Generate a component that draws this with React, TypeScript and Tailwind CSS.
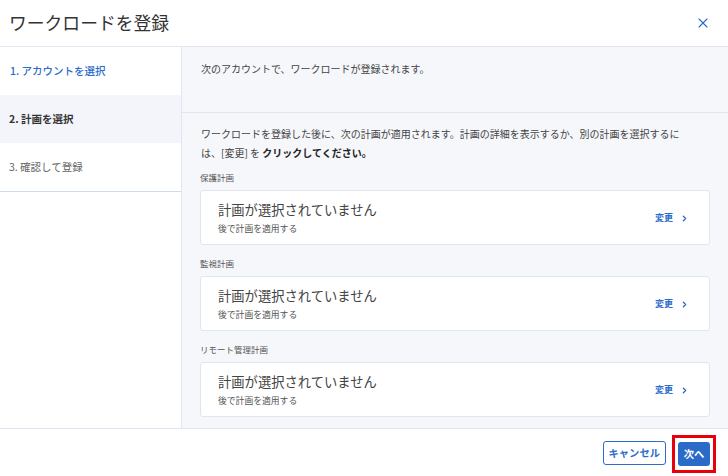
import { X, ChevronRight } from "lucide-react";

const plans = ["保護計画", "監視計画", "リモート管理計画"];

const PlanCard = ({ label, first }: { label: string; first?: boolean }) => (
  <div className={first ? "" : "mt-3"}>
    <div className="text-[8.5px] leading-[12px] text-[#555] mb-[7px]">{label}</div>
    <div className="h-[55px] bg-white border border-[#dfe6f1] rounded-[3px] flex items-center justify-between pl-[17px] pr-[20px]">
      <div className="flex flex-col">
        <span className="text-[13.3px] leading-[18px] text-[#444]">計画が選択されていません</span>
        <span className="text-[8.8px] leading-[12px] text-[#555] mt-[4px]">後で計画を適用する</span>
      </div>
      <button className="flex items-center gap-[7px] text-[9px] font-bold text-[#2c6ccb] mt-[1px]">
        変更
        <ChevronRight size={9} strokeWidth={3.5} />
      </button>
    </div>
  </div>
);

export default function App() {
  return (
    <div className="h-[476px] w-[728px] flex flex-col bg-white font-['Noto_Sans_CJK_JP','Noto_Sans',sans-serif] text-[#333]">
      {/* Header */}
      <header className="h-[47px] shrink-0 flex items-center justify-between pl-[9px] pr-[17px] border-b border-[#e1e7f0]">
        <h1 className="text-[17.8px] text-[#333] leading-none">ワークロードを登録</h1>
        <X size={16} strokeWidth={1.6} className="text-[#2c6ccb]" />
      </header>

      <div className="flex flex-1 min-h-0">
        {/* Sidebar */}
        <aside className="w-[182px] shrink-0 border-r border-[#dfe6f1] bg-white">
          <div className="border-b border-[#cfdcee]">
            <div className="h-[48px] flex items-center pl-[10px] text-[10.5px] font-medium text-[#2c6ccb]">1. アカウントを選択</div>
            <div className="h-[48px] flex items-center pl-[9px] text-[10.5px] font-bold text-[#333] bg-[#f3f5fa]">2. 計画を選択</div>
            <div className="h-[48px] flex items-center pl-[9px] text-[10.5px] text-[#666]">3. 確認して登録</div>
          </div>
        </aside>

        {/* Content */}
        <main className="flex-1 flex flex-col bg-[#f5f7fb]">
          <section className="h-[66px] shrink-0 border-b border-[#dfe6f1] pl-[19px] pt-[15px]">
            <p className="text-[10px] leading-[14px] text-[#444]">次のアカウントで、ワークロードが登録されます。</p>
          </section>
          <section className="flex-1 pl-[18px] pr-[18px] pt-[11px]">
            <p className="text-[10px] leading-[19px] text-[#444] pl-[1px] pr-[20px]">
              ワークロードを登録した後に、次の計画が適用されます。計画の詳細を表示するか、別の計画を選択するには、[変更] を <b className="text-[#222]">クリックしてください。</b>
            </p>
            <div className="mt-[9px]">
              {plans.map((p, i) => (
                <PlanCard key={p} label={p} first={i === 0} />
              ))}
            </div>
          </section>
        </main>
      </div>

      {/* Footer */}
      <footer className="h-[48px] shrink-0 border-t border-[#dfe6f1] flex items-center justify-end gap-3 pr-[18px]">
        <button className="h-[24px] px-[5px] border border-[#2c6ccb] rounded-[3px] text-[10.3px] font-bold text-[#2c6ccb] bg-white">
          キャンセル
        </button>
        <div className="relative">
          <button className="h-[24px] w-[32px] rounded-[3px] text-[10.3px] font-bold text-white bg-[#2a6bc8]">
            次へ
          </button>
          {/* annotation box */}
          <div className="absolute -left-[6px] -right-[6px] -top-[4px] -bottom-[7px] border-[3px] border-[#e8000b] pointer-events-none" />
        </div>
      </footer>
    </div>
  );
}
